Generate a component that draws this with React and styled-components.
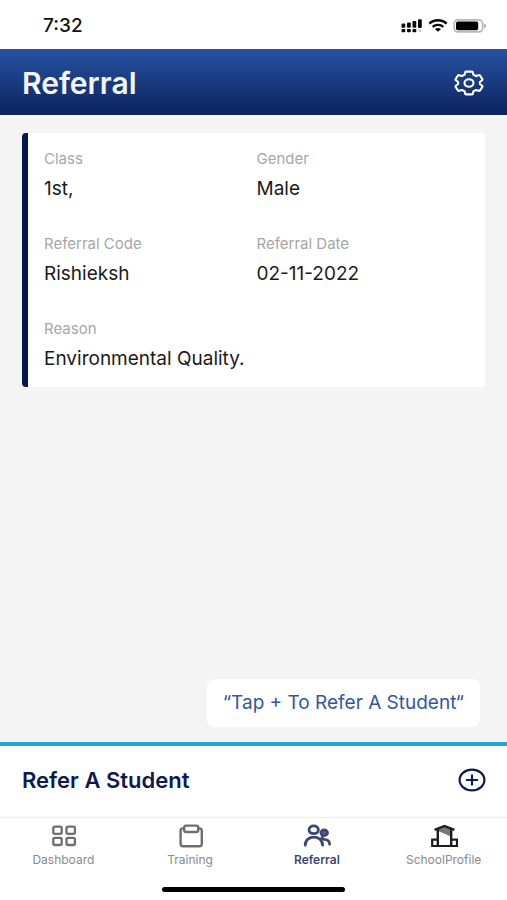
import React from 'react'
import styled, { createGlobalStyle } from 'styled-components'

const details = [
  { label: 'Class', value: '1st,' },
  { label: 'Gender', value: 'Male' },
  { label: 'Referral Code', value: 'Rishieksh' },
  { label: 'Referral Date', value: '02-11-2022' },
  { label: 'Reason', value: 'Environmental Quality.', wide: true },
]

const tabs = [
  { name: 'Dashboard', Icon: DashboardIcon },
  { name: 'Training', Icon: TrainingIcon },
  { name: 'Referral', Icon: PeopleIcon, active: true },
  { name: 'SchoolProfile', Icon: SchoolIcon },
]

function App() {
  return (
    <>
      <GlobalStyle />
      <Screen>
        <StatusBar>
          <Clock>7:32</Clock>
          <StatusIcons>
            <SignalIcon />
            <WifiIcon />
            <BatteryIcon />
          </StatusIcons>
        </StatusBar>
        <Header>
          <Title>Referral</Title>
          <IconButton aria-label='Settings'>
            <GearIcon />
          </IconButton>
        </Header>
        <Content>
          <Card>
            {details.map((item) => (
              <Field key={item.label} $wide={item.wide}>
                <Label>{item.label}</Label>
                <Value>{item.value}</Value>
              </Field>
            ))}
          </Card>
          <Hint>“Tap + To Refer A Student“</Hint>
        </Content>
        <ReferBar>
          <ReferTitle>Refer A Student</ReferTitle>
          <IconButton aria-label='Refer a student'>
            <PlusIcon />
          </IconButton>
        </ReferBar>
        <TabBar>
          {tabs.map(({ name, Icon, active }) => (
            <Tab key={name} href='#' $active={active} aria-current={active ? 'page' : undefined}>
              <Icon />
              {name}
            </Tab>
          ))}
        </TabBar>
        <HomeArea>
          <HomeIndicator />
        </HomeArea>
      </Screen>
    </>
  )
}

export default App

function SignalIcon() {
  return (
    <svg width='22' height='14' viewBox='0 0 22 14' fill='#0a0a0a'>
      <rect x='0.5' y='4.5' width='3.8' height='4.2' rx='1' />
      <rect x='6' y='3.5' width='3.8' height='5.2' rx='1' />
      <rect x='11.5' y='2' width='3.8' height='6.7' rx='1' />
      <rect x='17' y='0.3' width='3.8' height='8.6' rx='1' />
      <rect x='0.5' y='9.9' width='3.8' height='3.4' rx='1' />
      <rect x='6' y='9.9' width='3.8' height='3.4' rx='1' />
      <rect x='11.5' y='9.9' width='3.8' height='3.4' rx='1' />
      <rect x='17.4' y='10.2' width='3' height='2.8' rx='1' fill='#cfcfcf' />
    </svg>
  )
}

function WifiIcon() {
  return (
    <svg width='20' height='13' viewBox='0 0 20 13' fill='none' stroke='#0a0a0a'>
      <path d='M1.3 4.6C6 0.2 14 0.2 18.7 4.6' strokeWidth='2.4' />
      <path d='M4.6 7.9C7.6 5.2 12.4 5.2 15.4 7.9' strokeWidth='2.2' />
      <path d='M6.9 10.1C8.6 8.7 11.4 8.7 13.1 10.1L10 12.8Z' fill='#0a0a0a' stroke='none' />
    </svg>
  )
}

function BatteryIcon() {
  return (
    <svg width='34' height='14' viewBox='0 0 34 14'>
      <rect x='1.2' y='0.9' width='28.4' height='12' rx='3.6' fill='#fff' stroke='#b9b9b9' strokeWidth='1.7' />
      <rect x='3' y='2.6' width='22.2' height='8.7' rx='1.8' fill='#000' />
      <path d='M31.2 4.8C33.4 5.4 33.4 8.6 31.2 9.2Z' fill='#9d9d9d' />
    </svg>
  )
}

function GearIcon() {
  return (
    <svg width='30' height='26' viewBox='0 0 30 26' fill='none' stroke='#fff' strokeWidth='2.1' strokeLinejoin='round'>
      <path d='M12 1.6H18Q18.8 1.6 18.9 2.4L19.3 4.6L22 6L24.8 5.2Q25.6 5 26.1 5.7L28.3 9Q28.7 9.8 28 10.3L25.9 12V14L28 15.7Q28.7 16.2 28.3 17L26.1 20.3Q25.6 21 24.8 20.8L22 20L19.3 21.4L18.9 23.6Q18.8 24.4 18 24.4H12Q11.2 24.4 11.1 23.6L10.7 21.4L8 20L5.2 20.8Q4.4 21 3.9 20.3L1.7 17Q1.3 16.2 2 15.7L4.1 14V12L2 10.3Q1.3 9.8 1.7 9L3.9 5.7Q4.4 5 5.2 5.2L8 6L10.7 4.6L11.1 2.4Q11.2 1.6 12 1.6Z' />
      <ellipse cx='15' cy='13' rx='4.5' ry='3.8' />
    </svg>
  )
}

function PlusIcon() {
  return (
    <svg width='28' height='24' viewBox='0 0 28 24' fill='none' stroke='#0d1a52' strokeWidth='2.2' strokeLinecap='round'>
      <ellipse cx='14' cy='12' rx='12.4' ry='10.4' />
      <path d='M8.8 12H19.2M14 7.4V16.6' />
    </svg>
  )
}

function DashboardIcon() {
  return (
    <svg width='28' height='24' viewBox='0 0 28 24' fill='none' stroke='#6e6e6e' strokeWidth='2.3'>
      <rect x='4.3' y='2.6' width='8.4' height='7.2' rx='1.6' />
      <rect x='17.5' y='2.6' width='8.4' height='7.2' rx='1.6' />
      <rect x='4.3' y='13.8' width='8.4' height='7.2' rx='1.6' />
      <rect x='17.5' y='13.8' width='8.4' height='7.2' rx='1.6' />
    </svg>
  )
}

function TrainingIcon() {
  return (
    <svg width='28' height='24' viewBox='0 0 28 24' fill='none' stroke='#6e6e6e' strokeWidth='2.4' strokeLinejoin='round'>
      <path d='M8.5 4.4H7Q4.6 4.4 4.6 6.6V20Q4.6 22.2 7 22.2H23.4Q25.8 22.2 25.8 20V6.6Q25.8 4.4 23.4 4.4H22' />
      <rect x='8.2' y='1.6' width='14' height='6.4' rx='1.8' />
    </svg>
  )
}

function PeopleIcon() {
  return (
    <svg width='28' height='24' viewBox='0 0 28 24' fill='none' stroke='#3d4770' strokeWidth='2.8' strokeLinecap='round'>
      <ellipse cx='10.7' cy='5.8' rx='4.7' ry='3.9' />
      <ellipse cx='21.2' cy='8.8' rx='3.3' ry='2.8' fill='#5a6387' />
      <path d='M2.2 21.2C2.2 10.4 19.6 10.4 19.6 21.2' />
      <path d='M19 13.2C20 16 20 15.2 22.4 15.6C25.2 16 26.6 18.2 26.6 20.2' />
    </svg>
  )
}

function SchoolIcon() {
  return (
    <svg width='28' height='24' viewBox='0 0 28 24' fill='none' stroke='#1c1c1c' strokeWidth='2.2'>
      <path d='M8 5L14.5 2.4L21 5V12.6L8 7Z' fill='#777' stroke='none' />
      <path d='M4.6 5.8L14.5 2L24.4 5.8' strokeWidth='2.4' />
      <path d='M7.8 5V22M21.2 5V22' strokeWidth='2.4' />
      <path d='M7.8 15.6H2.2V22H27V15.6H21.2' />
    </svg>
  )
}

const GlobalStyle = createGlobalStyle`
*{
  box-sizing:border-box;
}
body{
  margin:0;
  background:white;
  font-family:Inter, Roboto, sans-serif;
}
svg{
  display:block;
  flex-shrink:0;
}
`

const Screen = styled.div`
min-height:100vh;
display:flex;
flex-direction:column;
`

const StatusBar = styled.div`
height:49px;
display:flex;
align-items:center;
justify-content:space-between;
padding:2px 20px 0 43px;
`

const Clock = styled.span`
font-size:19px;
line-height:24px;
font-weight:500;
color:#111;
`

const StatusIcons = styled.div`
display:flex;
align-items:center;
gap:5px;
`

const Header = styled.header`
height:66px;
display:flex;
align-items:center;
justify-content:space-between;
padding:1px 23px 0 22px;
background:linear-gradient(#2653a3, #0d235c);
`

const Title = styled.h1`
margin:0;
font-size:30px;
line-height:32px;
font-weight:600;
color:#f4f6ff;
`

const IconButton = styled.button`
display:flex;
padding:0;
border:0;
background:none;
cursor:pointer;
`

const Content = styled.main`
flex:1;
display:flex;
flex-direction:column;
justify-content:space-between;
padding:18px 22px 15px;
background:#f4f4f4;
`

const Card = styled.dl`
margin:0;
display:grid;
grid-template-columns:1fr 1fr;
row-gap:33px;
padding:16px;
background:white;
border-left:6px solid #07184f;
border-radius:4px;
`

const Field = styled.div`
display:flex;
flex-direction:column;
gap:8px;
grid-column:${props => props.$wide ? '1 / -1' : 'auto'};
`

const Label = styled.dt`
font-size:15px;
line-height:20px;
color:#a6a6a6;
`

const Value = styled.dd`
margin:0;
font-size:19px;
line-height:24px;
color:#1a1a1a;
`

const Hint = styled.div`
align-self:flex-end;
margin-right:5px;
padding:12px 16px;
border-radius:8px;
background:white;
font-size:19px;
line-height:24px;
color:#35569a;
`

const ReferBar = styled.section`
height:75px;
display:flex;
align-items:center;
justify-content:space-between;
padding:0 21px 4px 22px;
border-top:4px solid #1da8d8;
`

const ReferTitle = styled.h2`
margin:0;
font-size:22px;
line-height:24px;
font-weight:600;
color:#0d1a52;
`

const TabBar = styled.nav`
display:flex;
border-top:1px solid #ececec;
`

const Tab = styled.a`
flex:1;
display:flex;
flex-direction:column;
align-items:center;
gap:4px;
padding-top:6px;
font-size:12px;
line-height:16px;
font-weight:${props => props.$active ? 600 : 400};
color:${props => props.$active ? '#3d4770' : '#8a8a8a'};
text-decoration:none;
`

const HomeArea = styled.div`
display:flex;
justify-content:center;
padding:19px 0 8px;
`

const HomeIndicator = styled.div`
width:36%;
height:5px;
border-radius:3px;
background:black;
`
